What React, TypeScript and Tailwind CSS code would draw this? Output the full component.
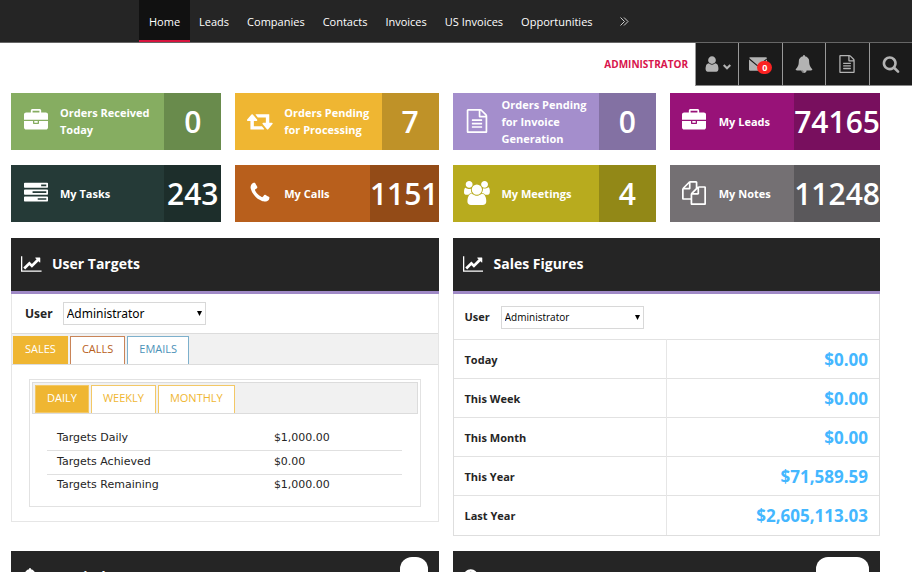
import React, { useState } from "react";

const paths = {
  user: "M1536 1399q0 109-62.5 187t-150.5 78h-854q-88 0-150.5-78t-62.5-187q0-85 8.5-160.5t31.5-152 58.5-131 94-89 134.5-34.5q131 128 313 128t313-128q76 0 134.5 34.5t94 89 58.5 131 31.5 152 8.5 160.5zm-256-887q0 159-112.5 271.5t-271.5 112.5-271.5-112.5-112.5-271.5 112.5-271.5 271.5-112.5 271.5 112.5 112.5 271.5z",
  briefcase: "M640 256h512v-128h-512v128zm1152 640v480q0 66-47 113t-113 47h-1472q-66 0-113-47t-47-113v-480h672v160q0 26 19 45t45 19h320q26 0 45-19t19-45v-160h672zm-768 0v128h-256v-128h256zm768-480v384h-1792v-384q0-66 47-113t113-47h352v-160q0-40 28-68t68-28h576q40 0 68 28t28 68v160h352q66 0 113 47t47 113z",
  file: "M1596 380q28 28 48 76t20 88v1152q0 40-28 68t-68 28h-1344q-40 0-68-28t-28-68v-1600q0-40 28-68t68-28h896q40 0 88 20t76 48zm-444-244v376h376q-10-29-22-41l-313-313q-12-12-41-22zm384 1528v-1024h-416q-40 0-68-28t-28-68v-416h-768v1536h1280zm-1024-864q0-14 9-23t23-9h704q14 0 23 9t9 23v64q0 14-9 23t-23 9h-704q-14 0-23-9t-9-23v-64zm736 224q14 0 23 9t9 23v64q0 14-9 23t-23 9h-704q-14 0-23-9t-9-23v-64q0-14 9-23t23-9h704zm0 256q14 0 23 9t9 23v64q0 14-9 23t-23 9h-704q-14 0-23-9t-9-23v-64q0-14 9-23t23-9h704z",
  tasks: "M1024 1408h640v-128h-640v128zm-384-512h1024v-128h-1024v128zm640-512h384v-128h-384v128zm512 832v256q0 26-19 45t-45 19h-1664q-26 0-45-19t-19-45v-256q0-26 19-45t45-19h1664q26 0 45 19t19 45zm0-512v256q0 26-19 45t-45 19h-1664q-26 0-45-19t-19-45v-256q0-26 19-45t45-19h1664q26 0 45 19t19 45zm0-512v256q0 26-19 45t-45 19h-1664q-26 0-45-19t-19-45v-256q0-26 19-45t45-19h1664q26 0 45 19t19 45z",
  chart: "M2048 1536v128h-2048v-1536h128v1408h1920zm-128-1248v435q0 21-19.5 29.5t-35.5-7.5l-121-121-633 633q-10 10-23 10t-23-10l-233-233-416 416-192-192 585-585q10-10 23-10t23 10l233 233 464-464-121-121q-16-16-7.5-35.5t29.5-19.5h435q14 0 23 9t9 23z",
  search: "M1216 832q0-185-131.5-316.5t-316.5-131.5-316.5 131.5-131.5 316.5 131.5 316.5 316.5 131.5 316.5-131.5 131.5-316.5zm512 832q0 52-38 90t-90 38q-54 0-90-38l-343-342q-179 124-399 124-143 0-273.5-55.5t-225-150-150-225-55.5-273.5 55.5-273.5 150-225 225-150 273.5-55.5 273.5 55.5 225 150 150 225 55.5 273.5q0 220-124 399l343 343q37 37 37 90z",
  phone: "M1600 1240q0 27-10 70.5t-21 68.5q-21 50-122 106-94 51-186 51-27 0-52.5-3.5t-57.5-12.5-47.5-14.5-55.5-20.5-49-18q-98-35-175-83-128-79-264.5-215.5t-215.5-264.5q-48-77-83-175-3-9-18-49t-20.5-55.5-14.5-47.5-12.5-57.5-3.5-52.5q0-92 51-186 56-101 106-122 25-11 68.5-21t70.5-10q14 0 21 3 18 6 53 76 11 19 30 54t35 63.5 31 53.5q3 4 17.5 25t21.5 35.5 7 28.5q0 20-28.5 50t-62 55-62 53-28.5 46q0 9 5 22.5t8.5 20.5 14 24 11.5 19q76 137 174 235t235 174q2 1 19 11.5t24 14 20.5 8.5 22.5 5q18 0 46-28.5t53-62 55-62 50-28.5q14 0 28.5 7t35.5 21.5 25 17.5q25 15 53.5 31t63.5 35 54 30q70 35 76 53 3 7 3 21z",
  bell: "M912 1696q0-16-16-16-59 0-101.5-42.5t-42.5-101.5q0-16-16-16t-16 16q0 73 51.5 124.5t124.5 51.5q16 0 16-16zm816-288q0 52-38 90t-90 38h-448q0 106-75 181t-181 75-181-75-75-181h-448q-52 0-90-38t-38-90q50-42 91-88t85-119.5 74.5-158.5 50-206 19.5-260q0-152 117-282.5t307-158.5q-8-19-8-39 0-40 28-68t68-28 68 28 28 68q0 20-8 39 190 28 307 158.5t117 282.5q0 139 19.5 260t50 206 74.5 158.5 85 119.5 91 88z",
  users: "M529 896q-162 5-265 128h-134q-82 0-138-40.5t-56-118.5q0-353 124-353 6 0 43.5 21t97.5 42.5 119 21.5q67 0 133-23-5 37-5 66 0 159 93 293zm1071 637q0 120-73 189.5t-194 69.5h-874q-121 0-194-69.5t-73-189.5q0-53 3.5-103.5t14-109 26.5-108.5 43-97.5 62-81 85.5-53.5 111.5-20q10 0 43 21.5t73 48 107 48 135 21.5 135-21.5 107-48 73-48 43-21.5q61 0 111.5 20t85.5 53.5 62 81 43 97.5 26.5 108.5 14 109 3.5 103.5zm-1024-1277q0 106-75 181t-181 75-181-75-75-181 75-181 181-75 181 75 75 181zm704 384q0 159-112.5 271.5t-271.5 112.5-271.5-112.5-112.5-271.5 112.5-271.5 271.5-112.5 271.5 112.5 112.5 271.5zm576 225q0 78-56 118.5t-138 40.5h-134q-103-123-265-128 93-134 93-293 0-29-5-66 66 23 133 23 59 0 119-21.5t97.5-42.5 43.5-21q124 0 124 353zm-128-609q0 106-75 181t-181 75-181-75-75-181 75-181 181-75 181 75 75 181z",
  files: "M1696 384q40 0 68 28t28 68v1216q0 40-28 68t-68 28h-960q-40 0-68-28t-28-68v-288h-544q-40 0-68-28t-28-68v-672q0-40 20-88t48-76l408-408q28-28 76-48t88-20h416q40 0 68 28t28 68v328q68-40 128-40h416zm-544 213l-299 299h299v-299zm-640-384l-299 299h299v-299zm196 647l316-316v-416h-384v416q0 40-28 68t-68 28h-416v640h512v-256q0-40 20-88t48-76zm956 804v-1152h-384v416q0 40-28 68t-68 28h-416v640h896z",
  envelope: "M120 216h1552q120 0 120 120v1100q0 120-120 120H120q-120 0-120-120V460l760 620q136 100 272 0l760-620V330L960 990q-64 50-128 0L20 300q20-84 100-84z",
  retweet: "M1280 1504q0 13-9.5 22.5t-22.5 9.5h-960q-8 0-13.5-2t-9-7-5.5-8-3-11.5-1-11.5v-600h-192q-26 0-45-19t-19-45q0-24 15-41l320-384q19-22 49-22t49 22l320 384q15 17 15 41 0 26-19 45t-45 19h-192v384h576q16 0 25 11l160 192q7 10 7 21zm640-416q0 24-15 41l-320 384q-20 23-49 23t-49-23l-320-384q-15-17-15-41 0-26 19-45t45-19h192v-384h-576q-16 0-25-12l-160-192q-7-9-7-20 0-13 9.5-22.5t22.5-9.5h960q8 0 13.5 2t9 7 5.5 8 3 11.5 1 11.5v600h192q26 0 45 19t19 45z",
};

type IconName = keyof typeof paths;

const boxes: Partial<Record<IconName, string>> = {
  chart: "0 0 2048 1792",
  users: "-64 0 1920 1792",
  retweet: "0 0 1920 1792",
};

function Icon({ name, className }: { name: IconName; className: string }) {
  return (
    <svg aria-hidden="true" viewBox={boxes[name] ?? "0 0 1792 1792"} className={`${className} w-auto shrink-0 fill-current`}>
      <path d={paths[name]} fillRule={name === "envelope" ? "evenodd" : "nonzero"} />
    </svg>
  );
}

const navItems = ["Home", "Leads", "Companies", "Contacts", "Invoices", "US Invoices", "Opportunities"];

const cards: { label: string; value: string; icon: IconName; bg: string; dark: string }[] = [
  { label: "Orders Received Today", value: "0", icon: "briefcase", bg: "bg-[#86ad61]", dark: "bg-[#698b4c]" },
  { label: "Orders Pending for Processing", value: "7", icon: "retweet", bg: "bg-[#efb632]", dark: "bg-[#bf9228]" },
  { label: "Orders Pending for Invoice Generation", value: "0", icon: "file", bg: "bg-[#a48ecc]", dark: "bg-[#8371a3]" },
  { label: "My Leads", value: "74165", icon: "briefcase", bg: "bg-[#981278]", dark: "bg-[#780f5e]" },
  { label: "My Tasks", value: "243", icon: "tasks", bg: "bg-[#253a37]", dark: "bg-[#1d2e2b]" },
  { label: "My Calls", value: "1151", icon: "phone", bg: "bg-[#b85f1c]", dark: "bg-[#934b17]" },
  { label: "My Meetings", value: "4", icon: "users", bg: "bg-[#b8ab1e]", dark: "bg-[#928817]" },
  { label: "My Notes", value: "11248", icon: "files", bg: "bg-[#747073]", dark: "bg-[#5a585b]" },
];

const targets = [
  ["Targets Daily", "$1,000.00"],
  ["Targets Achieved", "$0.00"],
  ["Targets Remaining", "$1,000.00"],
];

const sales = [
  ["Today", "$0.00"],
  ["This Week", "$0.00"],
  ["This Month", "$0.00"],
  ["This Year", "$71,589.59"],
  ["Last Year", "$2,605,113.03"],
];

function PanelHeader({ icon, title, children }: { icon: IconName; title?: string; children?: React.ReactNode }) {
  return (
    <header className="flex h-14 items-center gap-2.5 border-b-[3px] border-[#9f89c6] bg-[#252525] pr-[11px] pb-px pl-2.5 text-white">
      <span className="w-[21px]"><Icon name={icon} className="h-[18px]" /></span>
      <h2 className="flex-1 text-[14px] leading-5 font-bold">{title}</h2>
      {children}
    </header>
  );
}

function UserSelect({ id, className }: { id: string; className: string }) {
  return (
    <div className="relative">
      <select id={id} className={`${className} block h-[23px] w-[143px] appearance-none border border-[#d8d8d8] bg-white pl-[3px] text-black`}>
        <option>Administrator</option>
      </select>
      <svg aria-hidden="true" viewBox="0 0 5 5" className="pointer-events-none absolute top-[9px] right-1 h-[5px] w-[5px]">
        <path d="M0 0h5L2.5 5z" />
      </svg>
    </div>
  );
}

function Tab({ label, active, className, onClick }: { label: string; active: boolean; className: string; onClick: () => void }) {
  return (
    <button
      type="button"
      role="tab"
      aria-selected={active}
      onClick={onClick}
      className={`${className} h-7 border px-[11px] text-[11px] leading-4 ${active ? "border-[#efb632] bg-[#efb632] pb-0.5 text-white" : "border-b-0 bg-white pb-1"}`}
    >
      {label}
    </button>
  );
}

export default function App() {
  const [kind, setKind] = useState("SALES");
  const [period, setPeriod] = useState("DAILY");
  const kinds = [
    ["SALES", "border-[#efb632] text-[#efb632]"],
    ["CALLS", "border-[#c98457] text-[#b85f1c]"],
    ["EMAILS", "border-[#7db0cc] text-[#4b92b8]"],
  ];
  return (
    <div className="h-screen overflow-hidden bg-white font-['Open_Sans',sans-serif] text-[#252525]">
      <nav className="flex h-[43px] items-stretch border-b border-[#666] bg-[#252525] pl-[139px] text-[11px] text-white">
        {navItems.map((n) => (
          <a
            key={n}
            href="#"
            className={`flex items-center ${n === "Home" ? "border-b-2 border-[#d8143f] bg-[#111] px-2.5 pt-1" : "px-[9px] pt-0.5"}`}
          >
            {n}
          </a>
        ))}
        <button type="button" aria-label="More" className="ml-[18px]">
          <svg aria-hidden="true" viewBox="0 0 9 9" className="h-[9px] w-[9px] fill-none stroke-[#ccc]">
            <path d="M.5.5l4 4-4 4M4 .5l4 4-4 4" />
          </svg>
        </button>
      </nav>

      <div className="flex h-[43px] items-center justify-end">
        <span className="mr-[7px] text-[10px] font-bold text-[#d8144c]">ADMINISTRATOR</span>
        <div className="flex h-full w-[217px] text-[#b3b3b3] *:flex *:w-1/5 *:items-center *:justify-center *:border-b *:border-l *:border-b-[#888] *:border-l-[#999] *:bg-[#1b1b1b]">
          <button type="button" aria-label="Account" className="gap-0.5">
            <Icon name="user" className="h-[18px]" />
            <svg aria-hidden="true" viewBox="0 0 8 6" className="mt-1.5 h-1.5 w-2 fill-none stroke-current stroke-2">
              <path d="M.7 1L4 4.300 7.300 1" />
            </svg>
          </button>
          <button type="button" aria-label="Messages" className="relative pr-1.5">
            <Icon name="envelope" className="h-[18px]" />
            <span className="absolute top-[18px] left-[18px] flex h-[13px] w-[15px] items-center justify-center rounded-full bg-[#fb2323] text-[9px] font-bold text-white">0</span>
          </button>
          <button type="button" aria-label="Notifications"><Icon name="bell" className="h-[18px]" /></button>
          <button type="button" aria-label="Documents"><Icon name="file" className="h-[18px]" /></button>
          <button type="button" aria-label="Search"><Icon name="search" className="h-[18px]" /></button>
        </div>
      </div>

      <main className="pt-[7px] pr-8 pl-[11px]">
        <section className="grid grid-cols-[210fr_203fr_203fr_210fr] items-start gap-x-3.5 gap-y-[15px]">
          {cards.map((c) => (
            <a key={c.label} href="#" className={`${c.bg} flex h-[57px] items-stretch text-white`}>
              <span className="flex w-[49px] shrink-0 items-center justify-center pb-0.5">
                <Icon name={c.icon} className="h-6" />
              </span>
              <span className="flex flex-1 items-center pb-px text-[11px] leading-[17px] font-bold">{c.label}</span>
              <span className={`${c.dark} flex min-w-[57px] items-center justify-center text-[30px] leading-10 font-semibold`}>{c.value}</span>
            </a>
          ))}
        </section>

        <div className="mt-4 grid grid-cols-2 items-start gap-x-3.5">
          <section className="border border-t-0 border-[#e6e6e6]">
            <div className="-mx-px"><PanelHeader icon="chart" title="User Targets" /></div>
            <div className="flex h-[39px] items-center gap-2.5 pl-[13px] font-['Noto_Sans',sans-serif] text-[12px]">
              <label htmlFor="targets-user" className="font-bold">User</label>
              <UserSelect id="targets-user" className="text-[12px]" />
            </div>
            <div role="tablist" className="flex h-8 items-start gap-0.5 border-y border-[#dcdcdc] bg-[#f1f1f1] pt-0.5 pl-px">
              {kinds.map(([k, c]) => (
                <Tab key={k} label={k} active={kind === k} className={c} onClick={() => setKind(k)} />
              ))}
            </div>
            <div className="mx-[17px] mt-3.5 mb-3.5 border border-[#e2e2e2] p-0.5 pb-2.5">
              <div role="tablist" className="flex h-8 items-start gap-0.5 border border-[#dcdcdc] bg-[#f1f1f1] pt-0.5 pl-0.5">
                {["DAILY", "WEEKLY", "MONTHLY"].map((p) => (
                  <Tab key={p} label={p} active={period === p} className="border-[#f3c866] text-[#efb632]" onClick={() => setPeriod(p)} />
                ))}
              </div>
              <div className="mt-3 mr-4 ml-[15px]">
                <table className="w-full text-left font-['DejaVu_Sans',sans-serif] text-[11px]">
                  <tbody>
                    {targets.map(([label, value]) => (
                      <tr key={label} className="h-6 border-b border-[#e0e0e0] last:h-[22px] last:border-0">
                        <th scope="row" className="w-[64%] pl-2.5 font-normal">{label}</th>
                        <td>{value}</td>
                      </tr>
                    ))}
                  </tbody>
                </table>
              </div>
            </div>
          </section>

          <section className="border border-t-0 border-[#dedede]">
            <div className="-mx-px"><PanelHeader icon="chart" title="Sales Figures" /></div>
            <div className="flex h-[45px] items-center gap-[11px] pt-px pl-[11px] text-[11px]">
              <label htmlFor="sales-user" className="font-bold">User</label>
              <UserSelect id="sales-user" className="text-[10px]" />
            </div>
            <table className="w-full text-left">
              <tbody>
                {sales.map(([label, value]) => (
                  <tr key={label} className="h-[39px] border-t border-[#e2e2e2]">
                    <th scope="row" className="w-1/2 border-r border-[#e6e6e6] pt-0.5 pl-[11px] text-[11px] font-bold">{label}</th>
                    <td className="pt-0.5 pr-[11px] text-right text-[17px] leading-5 font-bold text-[#44b7ff]">{value}</td>
                  </tr>
                ))}
              </tbody>
            </table>
          </section>
        </div>

        <div className="mt-[15px] grid grid-cols-2 gap-x-3.5">
          <PanelHeader icon="bell" title="Reminders">
            <span className="h-10 w-7 rounded-[12px] bg-white" />
          </PanelHeader>
          <PanelHeader icon="search">
            <span className="h-10 w-[53px] rounded-[12px] bg-white" />
          </PanelHeader>
        </div>
      </main>
    </div>
  );
}
